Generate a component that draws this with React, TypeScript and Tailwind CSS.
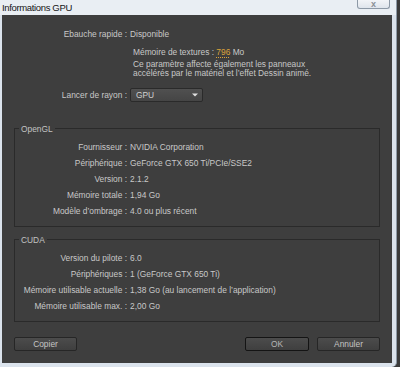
import React from "react";

function Row({ label, value }: { label: string; value: React.ReactNode }) {
  return (
    <div className="grid grid-cols-[112px_1fr] gap-x-[3px] h-4 items-center">
      <span className="text-right whitespace-nowrap">{label}</span>
      <span className="whitespace-nowrap">{value}</span>
    </div>
  );
}

function Group({ title, children, className = "" }: { title: string; children: React.ReactNode; className?: string }) {
  return (
    <div className={"relative border border-[#2a2a2a] pt-[10px] pb-[7px] " + className}>
      <span className="absolute left-[4px] top-[-5px] px-[2px] leading-[10px] bg-[#3e3e3e] text-[#c2c2c2]">{title}</span>
      {children}
    </div>
  );
}

function Btn({ children, def = false, w }: { children: React.ReactNode; def?: boolean; w: string }) {
  return (
    <div
      className={
        "h-[14px] rounded-[2px] flex items-center justify-center bg-gradient-to-b from-[#4c4c4c] to-[#3f3f3f] leading-none " +
        w +
        (def ? " border border-[#141414] text-[#b5b5b5]" : " border border-[#262626] text-[#c4c4c4]")
      }
    >
      {children}
    </div>
  );
}

export default function App() {
  return (
    <div className="w-[400px] h-[367px] bg-[#3b3b3b] overflow-hidden font-['Liberation_Sans',Arial,sans-serif]">
      <div className="w-[397px] h-[367px] bg-[#dbe3ec] rounded-br-[5px] border-r border-[#8e9aa7] flex flex-col pl-[2px] pr-[4px] pb-[4px]">
        <div className="h-[15px] flex items-start justify-between bg-[#e9eef3] -ml-[2px] -mr-[4px] pl-[2px] pr-[5px]">
          <span className="text-[9.5px] leading-[15px] text-[#151515] tracking-[-0.35px]">Informations GPU</span>
          <div className="w-[33px] h-[9px] mr-[1px] border border-t-0 border-[#8d99a6] rounded-b-[3px] bg-gradient-to-b from-[#f2f4f7] to-[#dfe5ec] flex items-end justify-center">
            <span className="text-[9px] leading-[8px] text-[#8a8f96] font-bold">x</span>
          </div>
        </div>
        <div className="w-[390px] flex-1 bg-[#3e3e3e] text-[8.4px] text-[#c8c8c8] pl-[12px] pr-[12px] pt-[11px] flex flex-col">
          <div className="grid grid-cols-[113px_1fr] gap-x-[3px] h-4 items-center">
            <span className="text-right">Ebauche rapide :</span>
            <span>Disponible</span>
          </div>
          <div className="h-4 mt-[2px] flex items-center pl-[119px] whitespace-nowrap">
            Mémoire de textures :&nbsp;
            <span className="text-[#dca43a] underline decoration-dotted decoration-[#dca43a] underline-offset-[2px]">796</span>
            &nbsp;Mo
          </div>
          <div className="pl-[119px] leading-[9px] whitespace-nowrap">
            <div>Ce paramètre affecte également les panneaux</div>
            <div>accélérés par le matériel et l’effet Dessin animé.</div>
          </div>
          <div className="grid grid-cols-[113px_1fr] gap-x-[3px] h-[14px] items-center mt-[10px]">
            <span className="text-right">Lancer de rayon :</span>
            <div className="w-[73px] h-[14px] border border-[#2a2a2a] rounded-[2px] bg-gradient-to-b from-[#505050] to-[#454545] flex items-center justify-between pl-[5px] pr-[4px]">
              <span className="text-[#d0d0d0]">GPU</span>
              <svg width="6" height="4" viewBox="0 0 6 4"><path d="M0 0.5 L6 0.5 L3 3.5 Z" fill="#e0e0e0" /></svg>
            </div>
          </div>
          <Group title="OpenGL" className="mt-[26px]">
            <Row label="Fournisseur :" value="NVIDIA Corporation" />
            <Row label="Périphérique :" value="GeForce GTX 650 Ti/PCIe/SSE2" />
            <Row label="Version :" value="2.1.2" />
            <Row label="Mémoire totale :" value="1,94 Go" />
            <Row label="Modèle d’ombrage :" value="4.0 ou plus récent" />
          </Group>
          <Group title="CUDA" className="mt-[12px]">
            <Row label="Version du pilote :" value="6.0" />
            <Row label="Périphériques :" value="1 (GeForce GTX 650 Ti)" />
            <Row label="Mémoire utilisable actuelle :" value="1,38 Go (au lancement de l’application)" />
            <Row label="Mémoire utilisable max. :" value="2,00 Go" />
          </Group>
          <div className="mt-[15px] flex justify-between">
            <Btn w="w-[63px]">Copier</Btn>
            <div className="flex gap-[8px]">
              <Btn w="w-[64px]" def>OK</Btn>
              <Btn w="w-[63px]">Annuler</Btn>
            </div>
          </div>
        </div>
      </div>
    </div>
  );
}
